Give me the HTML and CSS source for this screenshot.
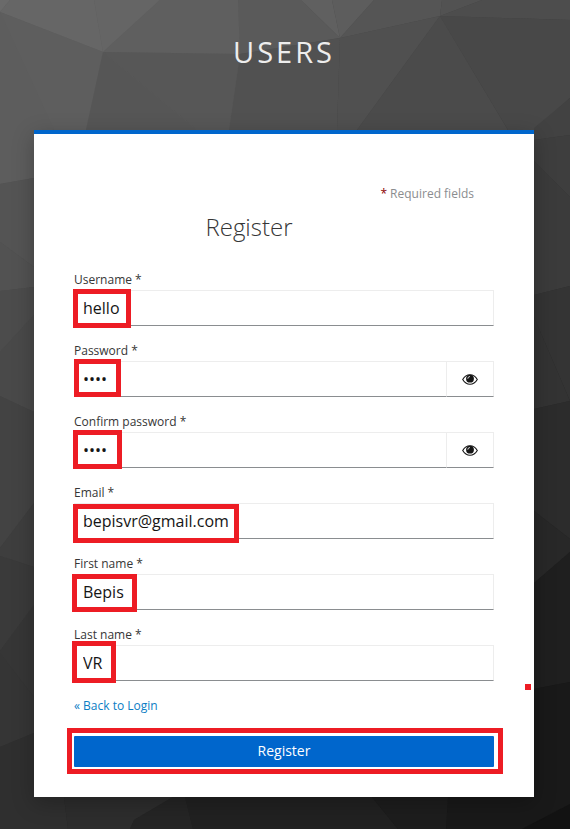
FILE: index.html
```html
<!DOCTYPE html>
<html lang="en">
<head>
<meta charset="utf-8">
<title>Register</title>
<link rel="stylesheet" href="styles.css">
</head>
<body>
<svg class="backdrop" viewBox="0 0 570 829" aria-hidden="true">
  <defs>
    <linearGradient id="base" x1="0" y1="0" x2="0.6" y2="1"><stop offset="0" stop-color="#5d5d5d"/><stop offset="1" stop-color="#191919"/></linearGradient>
  </defs>
  <rect width="570" height="829" fill="url(#base)"/>
  <path fill="#5d5d5d" d="M0 0H240V130H34V178L0 184Z"/>
  <path fill="#6a6a6a" d="M0 0H10L0 12Z"/>
  <path fill="#666" d="M10 0H94L103 52L0 12Z"/>
  <path fill="#656565" d="M94 0H160L103 52Z"/>
  <path fill="#5f5f5f" d="M160 0H238L240 54L103 52Z"/>
  <path fill="#5e5e5e" d="M0 12L103 52L86 130H54Z"/>
  <path fill="#575757" d="M103 52L240 54L229 130H197Z"/>
  <path fill="#565656" d="M103 52L197 130H86Z"/>
  <path fill="#5a5a5a" d="M238 0H301L340 38L240 54Z"/>
  <path fill="#606060" d="M301 0H332L340 38Z"/>
  <path fill="#5d5d5d" d="M332 0H374L340 38Z"/>
  <path fill="#555" d="M374 0H442L440 16L340 38Z"/>
  <path fill="#525252" d="M442 0H482L440 16Z"/>
  <path fill="#4d4d4d" d="M482 0H570V20L440 16Z"/>
  <path fill="#515151" d="M240 54L340 38L337 130H229Z"/>
  <path fill="#505050" d="M340 38L440 16L357 130H337Z"/>
  <path fill="#4b4b4b" d="M440 16L508 130H357Z"/>
  <path fill="#484848" d="M440 16L570 20V98L534 130H508Z"/>
  <path fill="#545454" d="M0 184L34 178V267L0 242Z"/>
  <path fill="#525252" d="M0 242L34 267V287L0 291Z"/>
  <path fill="#4c4c4c" d="M0 291L34 287V315L0 352Z"/>
  <path fill="#494949" d="M0 352L34 315V412L0 396Z"/>
  <path fill="#434343" d="M0 396L34 412V503L0 548Z"/>
  <path fill="#3e3e3e" d="M0 548L34 503V567L0 556Z"/>
  <path fill="#3a3a3a" d="M0 556L34 567V605L0 651Z"/>
  <path fill="#363636" d="M0 651L34 605V697L0 653Z"/>
  <path fill="#353535" d="M0 653L34 697V733L0 747Z"/>
  <path fill="#2f2f2f" d="M0 747L34 733L64 797L68 829H0Z"/>
  <path fill="#424242" d="M534 128L570 98V135L534 140Z"/>
  <path fill="#3e3e3e" d="M534 140L570 135V197L534 161Z"/>
  <path fill="#3b3b3b" d="M534 161L570 197V286L534 295Z"/>
  <path fill="#343434" d="M534 295L570 286V401L534 317Z"/>
  <path fill="#333" d="M534 317L570 401L534 409Z"/>
  <path fill="#2c2c2c" d="M534 409L570 401V539L534 511Z"/>
  <path fill="#282828" d="M534 511L570 539V552L534 583Z"/>
  <path fill="#1f1f1f" d="M534 583L570 552V682L534 689Z"/>
  <path fill="#191919" d="M534 689L570 682V804L522 829H446L448 797H534Z"/>
  <path fill="#2d2d2d" d="M64 797H173L134 820L130 829H68Z"/>
  <path fill="#252525" d="M173 797H185L193 829H130L134 820Z"/>
  <path fill="#212121" d="M185 797H372L398 829H193Z"/>
  <path fill="#1d1d1d" d="M372 797H448L446 829H398Z"/>
  <path fill="#121212" d="M570 804V829H522Z"/>
</svg>
<svg class="symbols" aria-hidden="true">
  <symbol id="eye" viewBox="0 0 16 11">
    <path d="M.7 5.5C2.3 2.8 4.900.8 8 .8s5.700 2 7.300 4.700C13.700 8.200 11.100 10.200 8 10.200S2.300 8.200.7 5.500Z" fill="none" stroke="currentColor" stroke-width="1.100"/>
    <circle cx="8" cy="4.700" r="3.900" fill="currentColor"/>
    <path d="M5.800 4.700Q5.800 2.500 8 2.500" fill="none" stroke="#fff" stroke-width=".8"/>
  </symbol>
</svg>

<div class="page">
  <header class="realm">USERS</header>
  <main class="card">
    <div class="required"><span class="star">*</span> Required fields</div>
    <h1>Register</h1>
    <form>
      <div class="field"><label for="username">Username *</label><input id="username" type="text" value="hello"></div>
      <div class="field"><label for="password">Password *</label>
        <div class="group"><input id="password" type="password" value="1234"><button class="reveal" type="button"><svg><use href="#eye"/></svg></button></div></div>
      <div class="field"><label for="confirm">Confirm password *</label>
        <div class="group"><input id="confirm" type="password" value="1234"><button class="reveal" type="button"><svg><use href="#eye"/></svg></button></div></div>
      <div class="field"><label for="email">Email *</label><input id="email" type="text" value="bepisvr@gmail.com" spellcheck="false"></div>
      <div class="field"><label for="first">First name *</label><input id="first" type="text" value="Bepis"></div>
      <div class="field"><label for="last">Last name *</label><input id="last" type="text" value="VR"></div>
      <a class="back">« Back to Login</a>
      <button class="submit" type="button">Register</button>
    </form>
  </main>
</div>

<div class="mark mark-username"></div>
<div class="mark mark-password"></div>
<div class="mark mark-confirm"></div>
<div class="mark mark-email"></div>
<div class="mark mark-first"></div>
<div class="mark mark-last"></div>
<div class="mark mark-submit"></div>
<div class="mark mark-dot"></div>
</body>
</html>
```
FILE: styles.css
```css
* { box-sizing: border-box; }
body {
  margin: 0;
  position: relative;
  width: 570px;
  height: 829px;
  overflow: hidden;
  background: #333;
  font-family: "Open Sans", "Noto Sans", sans-serif;
  font-size: 12px;
  line-height: 18px;
  color: #363636;
}
.backdrop { position: absolute; inset: 0; width: 570px; height: 829px; }
.symbols { position: absolute; width: 0; height: 0; }
.page { position: relative; width: 568px; }
.realm {
  height: 130px;
  padding-top: 32px;
  text-align: center;
  font-size: 29px;
  line-height: 40px;
  letter-spacing: 3px;
  color: #ededed;
}
.card {
  width: 500px;
  height: 667px;
  margin: 0 34px;
  padding: 51px 40px 0;
  background: #fff;
  border-top: 4px solid #06c;
  box-shadow: 0 6px 20px rgba(3, 3, 3, .25);
}
.required { padding-right: 20px; text-align: right; color: #8b8d8f; }
.star { color: #8b0000; }
h1 {
  margin: 8px 70px 0 0;
  text-align: center;
  font-size: 24px;
  line-height: 32px;
  font-weight: 300;
}
form { padding-top: 28px; }
.field { height: 71px; display: flex; flex-direction: column; }
label { display: block; height: 19px; line-height: 18px; }
input {
  width: 100%;
  height: 36px;
  min-width: 0;
  margin: 0;
  padding: 0 8px;
  border: 1px solid #ededed;
  border-bottom-color: #8a8d90;
  border-radius: 0;
  outline: 0;
  background: #fff;
  color: #151515;
  font: 16px/24px "Open Sans", "Noto Sans", sans-serif;
}
.group { display: flex; }
.group input { flex: 1; border-right: 0; }
.reveal {
  width: 48px;
  height: 36px;
  padding: 0;
  display: flex;
  align-items: center;
  justify-content: center;
  border: 1px solid #ededed;
  border-bottom-color: #8a8d90;
  background: #fff;
  color: #151515;
}
.reveal svg { width: 16px; height: 11px; }
.back { display: block; color: #0b7dc4; }
.submit {
  display: block;
  width: 100%;
  height: 31px;
  margin-top: 21px;
  padding: 0 0 2px;
  border: 0;
  border-radius: 1px;
  background: #06c;
  color: #fff;
  font: 14px/20px "Open Sans", "Noto Sans", sans-serif;
}
.mark { position: absolute; border: 5px solid #ed1c24; }
.mark-username { left: 73px; top: 289px; width: 58px; height: 39px; }
.mark-password { left: 74px; top: 359px; width: 47px; height: 38px; }
.mark-confirm { left: 73px; top: 430px; width: 49px; height: 39px; }
.mark-email { left: 73px; top: 504px; width: 166px; height: 39px; }
.mark-first { left: 72px; top: 574px; width: 65px; height: 38px; }
.mark-last { left: 72px; top: 641px; width: 44px; height: 42px; }
.mark-submit { left: 67px; top: 728px; width: 436px; height: 46px; }
.mark-dot { left: 525px; top: 684px; width: 6px; height: 6px; border-width: 3px; }
```
